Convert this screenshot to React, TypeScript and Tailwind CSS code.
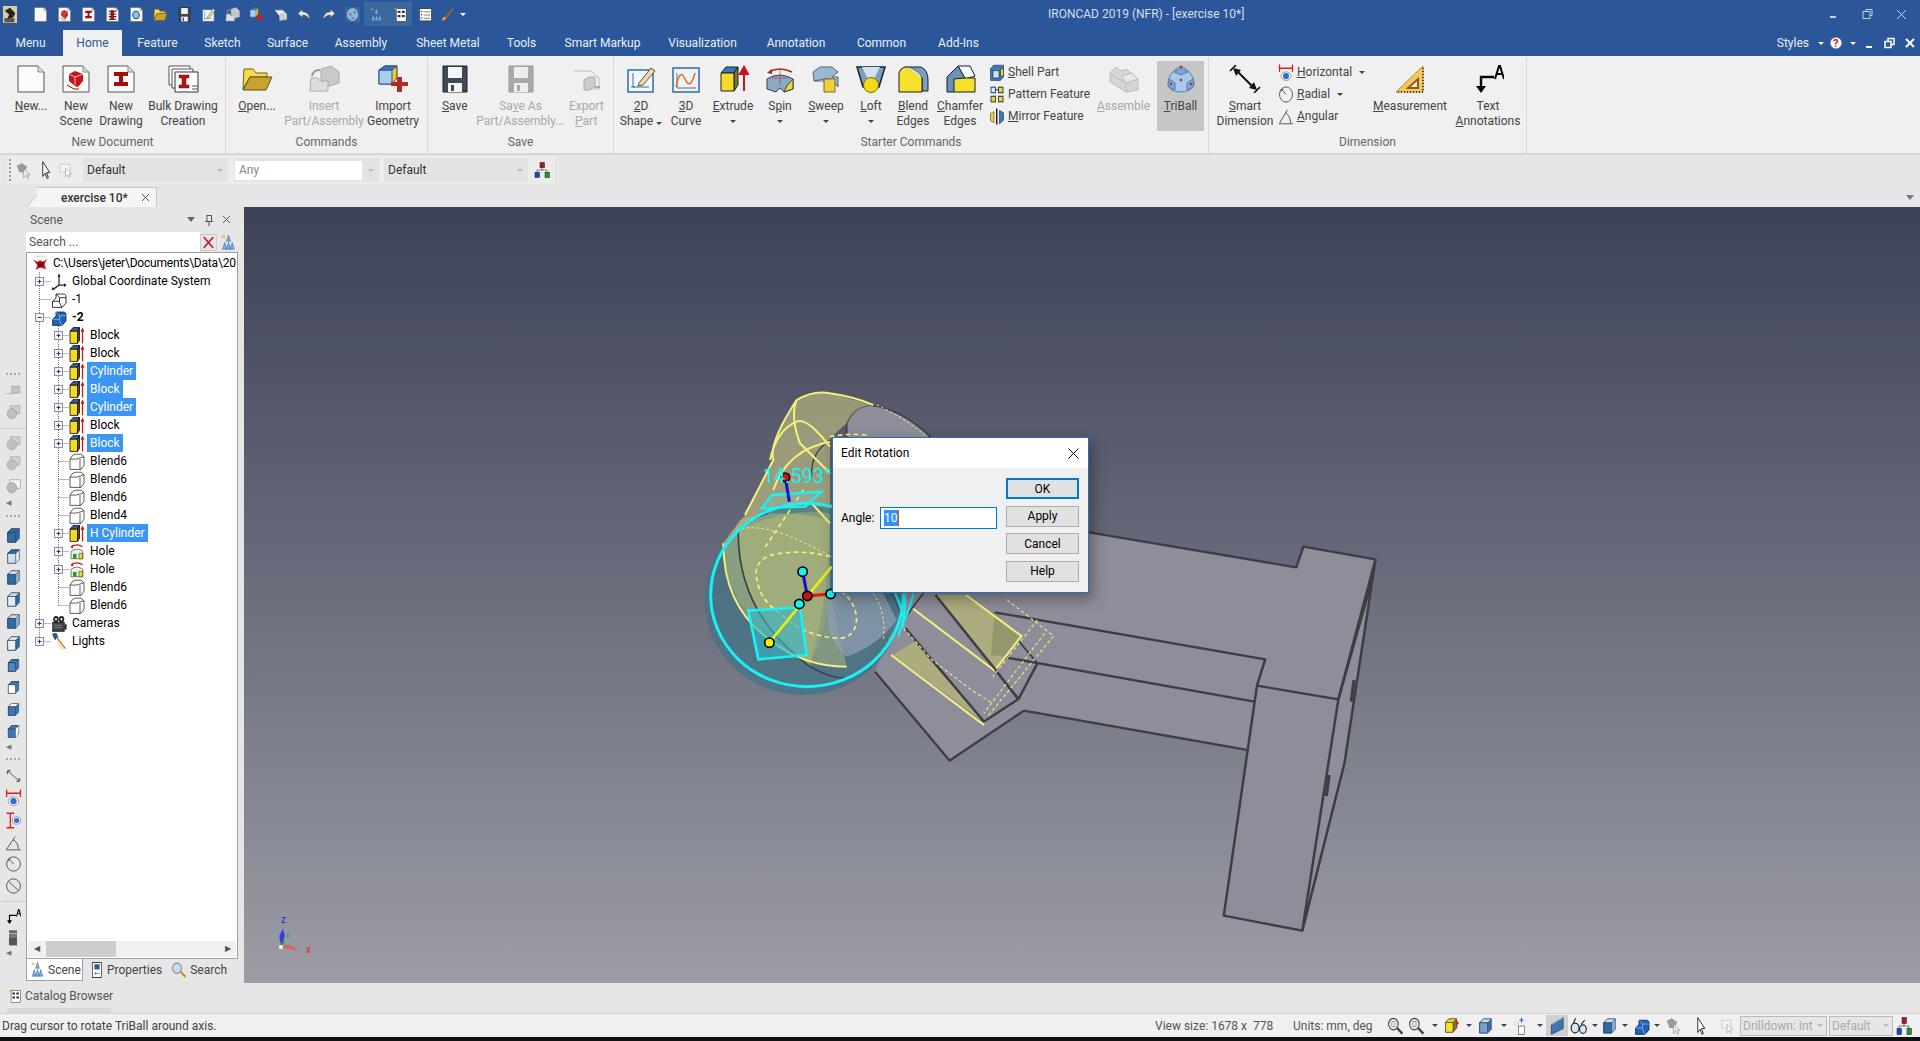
import React from 'react';

const FONT = 'font-["Roboto",_"Liberation_Sans",_sans-serif]';

const cube = (top: string, left: string, right: string) => (
  <>
    <path d="M5 9L12 3H27V19L20 25H5Z" fill={right} stroke="#234" />
    <path d="M5 9L12 3H27L20 9Z" fill={top} stroke="#234" />
    <path d="M5 9H20V25H5Z" fill={left} stroke="#234" />
  </>
);

const page = (
  <>
    <path d="M3 1H23L29 7V27H3Z" fill="#fbfbfb" stroke="#555" />
    <path d="M23 1V7H29" fill="#ddd" stroke="#888" />
  </>
);

const ibeam = <path d="M9 7H23V11H18V17H23V21H9V17H14V11H9Z" fill="#a40b0b" />;

// every drawing shares one 32x28 box, it gets squeezed by width/height
const ICONS: Record<string, React.ReactNode> = {
  logo: (
    <>
      <rect width="32" height="28" fill="#d8d0a0" />
      <path d="M4 8L16 3L28 12L24 18L8 24L14 14Z" fill="#222" />
      <path d="M3 20H26V27H3Z" fill="#555" />
    </>
  ),
  doc: page,
  scene: (
    <>
      {page}
      <path d="M9 9L15 6L23 9V16L18 22L15 21L9 16Z" fill="#c4151c" />
      <path d="M15 12V20M9 9L15 12L23 9" stroke="#fff" fill="none" strokeWidth=".7" />
      <path d="M7 20L14 24H19" stroke="#a00" fill="none" />
    </>
  ),
  root: (
    <>
      <path d="M2 8L11 12L16 9L22 12L30 7L25 16L28 25L17 22L7 26L11 18Z" fill="#d0101a" />
      <path d="M12 13L17 15L23 12V18L16 22L11 18Z" fill="#6a0a10" />
      <path d="M5 2L27 2" stroke="#333" strokeDasharray="2 3" />
    </>
  ),
  drawing: (
    <>
      {page}
      {ibeam}
    </>
  ),
  multi: (
    <>
      {page}
      <path d="M8 8H24M8 13H24M8 18H24M8 23H24" stroke="#222" strokeWidth="2" />
      <path d="M12 6H19V24H12Z" fill="#a40b0b" />
    </>
  ),
  globePage: (
    <>
      {page}
      <circle cx="15" cy="15" r="7" fill="#7ec8e8" stroke="#246" strokeWidth="2" />
    </>
  ),
  bulk: (
    <>
      <path d="M2 1H23V20H2Z" fill="#fff" stroke="#555" />
      <path d="M5 4H26V23H5Z" fill="#fff" stroke="#555" />
      <path d="M8 7H31V27H8Z" fill="#fff" stroke="#333" />
      <path d="M12 10H22V13H19V20H22V23H12V20H15V13H12Z" fill="#c81010" stroke="#222" strokeWidth=".5" />
      <path d="M25 21H31M25 24H31" stroke="#555" />
    </>
  ),
  folder: (
    <>
      <path d="M2 24L3 4H12L15 8H26V12H9Z" fill="#f7dc4a" stroke="#6d5f1e" />
      <path d="M2 25L9 12H31L25 25Z" fill="#c9a332" stroke="#5f5016" />
    </>
  ),
  insert: (
    <>
      <path d="M13 4L23 1L31 7V18L21 21L13 15Z" fill="#c9c9c9" stroke="#aaa" />
      <path d="M2 26L3 13H10L12 16H20V26Z" fill="#dedede" stroke="#aaa" />
      <path d="M4 11Q5 5 12 5" fill="none" stroke="#999" strokeWidth="2" />
    </>
  ),
  importGeo: (
    <>
      <path d="M2 5L8 1H20V13L15 19H2Z" fill="#f0c92c" stroke="#234" />
      <path d="M2 5H15V19H2Z" fill="#a8cbee" stroke="#1f5a9a" />
      <path d="M2 5L8 1H20L15 5Z" fill="#3f77b5" stroke="#1f5a9a" />
      <path d="M20 12H25V17H31V21H25V27H20V21H14V17H20Z" fill="#b32a25" />
    </>
  ),
  floppy: (
    <>
      <path d="M4 1H28V27H4Z" fill="#3f4a59" stroke="#222" />
      <path d="M9 2H23V13H9Z" fill="#f4f4f4" />
      <path d="M9 18H23V27H9Z" fill="#f4f4f4" />
      <path d="M12 20H15V26H12Z" fill="#3f4a59" />
    </>
  ),
  floppyOff: (
    <>
      <path d="M4 1H28V27H4Z" fill="#a9a9a9" stroke="#999" />
      <path d="M9 2H23V13H9Z" fill="#eee" />
      <path d="M9 18H23V27H9Z" fill="#eee" />
      <path d="M12 20H15V26H12Z" fill="#a9a9a9" />
    </>
  ),
  exportPart: (
    <>
      <path d="M4 6H21L29 13V24H20" fill="#f0f0f0" stroke="#bbb" />
      <path d="M14 15L19 12H25V20L20 25H14Z" fill="#ccc" stroke="#aaa" />
      <path d="M24 22H30" stroke="#aaa" strokeWidth="2" />
    </>
  ),
  shape2d: (
    <>
      <rect x="3" y="5" width="25" height="22" fill="#f4f8fc" stroke="#2f6ca8" strokeWidth="1.5" />
      <path d="M8 8V22H24M6 22H10" stroke="#2f6ca8" fill="none" />
      <path d="M14 18L26 3L30 6L18 20L13 21Z" fill="#f0d9a0" stroke="#555" />
    </>
  ),
  curve3d: (
    <>
      <rect x="3" y="3" width="26" height="24" fill="#eef3f8" stroke="#2f6ca8" strokeWidth="1.5" />
      <path d="M7 8V23H26" stroke="#668" fill="none" />
      <path d="M6 22Q10 2 15 14T25 8" stroke="#e86a20" fill="none" strokeWidth="1.5" />
    </>
  ),
  extrude: (
    <>
      <path d="M4 8L9 2H21L17 8Z" fill="#3f77b5" stroke="#123" />
      <path d="M17 8L21 2V20L17 26Z" fill="#8a7420" stroke="#123" />
      <path d="M4 8H17V26H4Z" fill="#f7d928" stroke="#123" />
      <path d="M27 26V8M23 9L27 2L31 9Z" stroke="#d0101a" fill="#d0101a" strokeWidth="2" />
    </>
  ),
  treeBlock: (
    <>
      <path d="M2 7L8 1H21L17 7Z" fill="#2a62aa" stroke="#111" strokeWidth="1.5" />
      <path d="M17 7L21 1V22L17 27Z" fill="#5a4c10" stroke="#111" strokeWidth="1.5" />
      <path d="M2 7H17V27H2Z" fill="#f7d928" stroke="#111" strokeWidth="1.5" />
      <path d="M27 27V7" stroke="#d0101a" strokeWidth="2.4" />
      <path d="M23 8L27 1L31 8Z" fill="#d0101a" />
    </>
  ),
  spin: (
    <>
      <path d="M3 14Q15 6 29 14V24L20 27Q16 20 12 27L3 24Z" fill="#8da8c4" stroke="#345" />
      <path d="M20 27Q22 20 29 14V24Z" fill="#f2d52a" stroke="#345" />
      <path d="M5 7Q15 1 28 7" fill="none" stroke="#a5281e" strokeWidth="1.5" />
      <path d="M3 8L8 4V9Z" fill="#a5281e" />
      <path d="M16 5V20M8 13H24" stroke="#a33" strokeWidth=".6" />
    </>
  ),
  sweep: (
    <>
      <path d="M3 7L10 2H22L28 7L22 12H28V22L21 14H14L4 16Z" fill="#9ab7d4" stroke="#567" />
      <path d="M14 14H25V27H14Z" fill="#f2cf3c" stroke="#7a6a20" />
      <path d="M4 16H14V14" fill="none" stroke="#567" />
    </>
  ),
  loft: (
    <>
      <path d="M2 2H30L24 22H8Z" fill="#7f9dbd" stroke="#123" strokeWidth="1.5" />
      <path d="M7 2H25L19 14H13Z" fill="#d4e2f0" />
      <circle cx="16" cy="20" r="7.5" fill="#f5d818" stroke="#7a6a10" />
    </>
  ),
  blend: (
    <>
      <path d="M8 2H24Q31 5 31 15V26H25V13Z" fill="#7f9dbd" stroke="#123" />
      <path d="M2 8Q3 3 8 2Q20 3 25 13V27H2Z" fill="#f7e02c" stroke="#123" />
      <path d="M8 2Q20 3 25 13L21 10Q13 3 8 2" fill="#cfdcea" />
    </>
  ),
  chamfer: (
    <>
      <path d="M14 1H26L31 11L21 14Z" fill="#fafafa" stroke="#123" />
      <path d="M3 12L14 1L21 13L10 27H3Z" fill="#6d90b5" stroke="#123" />
      <path d="M10 14L21 13H31V27H10Z" fill="#f7e02c" stroke="#123" />
    </>
  ),
  shell: (
    <>
      <path d="M3 8L9 2H29V21L23 27H3Z" fill="#3f77b5" stroke="#123" />
      <path d="M8 11H20V23H8Z" fill="#cfe0f2" stroke="#123" />
      <path d="M23 8H29V20H23Z" fill="#f2cf3c" stroke="#123" />
    </>
  ),
  pattern: (
    <>
      <rect x="4" y="2" width="9" height="9" fill="#dbe8f6" stroke="#1f5a9a" strokeWidth="2" />
      <rect x="19" y="2" width="9" height="9" fill="#f2d52a" stroke="#444" strokeWidth="2" />
      <rect x="4" y="17" width="9" height="9" fill="#f2d52a" stroke="#444" strokeWidth="2" />
      <rect x="19" y="17" width="9" height="9" fill="#f2d52a" stroke="#444" strokeWidth="2" />
      <path d="M13 6H19" stroke="#1f5a9a" strokeWidth="2" />
    </>
  ),
  mirror: (
    <>
      <path d="M3 9L10 6V24L3 21Z" fill="#f2d52a" stroke="#333" />
      <path d="M14 1H17V27H14Z" fill="#223" />
      <path d="M21 4L29 8V20L21 26Z" fill="#3f77b5" stroke="#123" />
    </>
  ),
  assemble: (
    <>
      <path d="M2 8L8 2L13 6L18 4L30 14V25L18 27L2 17Z" fill="#d6d6d6" stroke="#bbb" />
      <path d="M14 11L24 8L30 14L18 18Z" fill="#e8e8e8" stroke="#bbb" />
      <path d="M18 18V27M2 9L18 18" stroke="#bbb" />
    </>
  ),
  triball: (
    <>
      <path d="M16 1Q30 8 29 20Q26 27 16 27Q5 27 3 20Q2 8 16 1Z" fill="#a9c8ee" stroke="#5b7ea8" />
      <path d="M9 7L16 3L23 7L16 10Z" fill="#7aa7dc" stroke="#5b7ea8" />
      <path d="M4 14L10 18V25Q5 24 3 20ZM28 14L22 18V25Q27 24 29 20Z" fill="#7aa7dc" stroke="#5b7ea8" />
      <circle cx="16" cy="2" r="1.3" fill="#d0202a" />
      <circle cx="16" cy="15" r="1.3" fill="#d0202a" />
      <circle cx="6" cy="19" r="1.3" fill="#d0202a" />
      <circle cx="26" cy="19" r="1.3" fill="#d0202a" />
    </>
  ),
  smartDim: (
    <>
      <path d="M1 6L7 0M25 28L31 22" stroke="#111" strokeWidth="1.6" />
      <path d="M7 5L25 23" stroke="#111" strokeWidth="2" />
      <path d="M4 3L12 5L7 11ZM28 25L20 23L25 17Z" fill="#111" />
    </>
  ),
  horizontal: (
    <>
      <path d="M3 1V13M29 1V13M4 7H28" stroke="#e01a1a" strokeWidth="2.4" />
      <ellipse cx="16" cy="20" rx="10" ry="7" fill="#fff" stroke="#555" />
      <ellipse cx="16" cy="20" rx="6" ry="5" fill="#2a6fd0" />
    </>
  ),
  vertical: (
    <>
      <path d="M3 2H17M3 26H17M10 3V25" stroke="#e01a1a" strokeWidth="2.4" />
      <ellipse cx="22" cy="14" rx="8" ry="6" fill="#fff" stroke="#555" />
      <ellipse cx="22" cy="14" rx="5" ry="4" fill="#2a6fd0" />
    </>
  ),
  radial: (
    <>
      <ellipse cx="16" cy="14" rx="13" ry="12.5" fill="none" stroke="#333" strokeWidth="1.4" />
      <path d="M16 14L8 6M6 9L7 5L11 5" stroke="#333" fill="none" strokeWidth="1.4" />
    </>
  ),
  diameter: (
    <>
      <ellipse cx="16" cy="14" rx="13" ry="12.5" fill="none" stroke="#333" strokeWidth="1.4" />
      <path d="M7 6L25 22" stroke="#333" strokeWidth="1.4" />
    </>
  ),
  angular: (
    <>
      <path d="M2 26H30M3 25L19 3" stroke="#333" strokeWidth="1.4" />
      <path d="M15 8Q25 13 25 25" stroke="#333" fill="none" strokeWidth="1.4" />
    </>
  ),
  measure: (
    <>
      <path d="M29 1V27H2Z" fill="#f3c95a" stroke="#b5892a" />
      <path d="M24 14V23H14Z" fill="#f0f0f0" stroke="#a4501e" strokeWidth="2" />
      <path d="M29 3V27H3" fill="none" stroke="#222" strokeDasharray="1 2" strokeWidth="1.5" />
    </>
  ),
  textAnn: (
    <>
      <path d="M22 12H9V26" fill="none" stroke="#000" strokeWidth="2.4" />
      <path d="M4 21H14L9 28Z" fill="#000" />
      <path d="M23 14L27 1H28L32 14M25 9H30" fill="none" stroke="#000" strokeWidth="2" />
    </>
  ),
  tree: (
    <>
      <path d="M16 2L12 12H20Z M9 14L5 25H13Z M23 14L19 25H27Z M16 14L12 25H20Z" fill="#7fb0df" stroke="#2c6aa8" />
      <path d="M5 3L8 6M8 3L5 6M3 4.500H10" stroke="#e8a400" strokeWidth="1.2" />
    </>
  ),
  treeSpark: (
    <>
      <rect x="7" y="3" width="21" height="24" fill="#fff" stroke="#222" />
      <path d="M10 7H16V11H10ZM19 7H25V11H19ZM10 15H16V19H10ZM19 15H25V19H19Z" fill="#333" />
      <path d="M5 2L8 6M8 2L5 6M3 4H10" stroke="#e8a400" strokeWidth="1.5" />
    </>
  ),
  listBox: (
    <>
      <rect x="3" y="3" width="26" height="23" fill="#fff" stroke="#333" strokeWidth="1.5" />
      <path d="M12 9H26M12 15H26M12 21H26" stroke="#555" strokeWidth="1.5" />
      <path d="M6 7H9V10H6ZM6 13H9V16H6ZM6 19H9V22H6Z" fill="#555" />
    </>
  ),
  brush: (
    <>
      <path d="M10 20L27 2L29 4L13 23Z" fill="#a5651e" />
      <path d="M4 26Q7 16 12 19Q14 23 4 26" fill="#f2c94a" stroke="#c83a20" />
    </>
  ),
  undo: <path d="M2 12L12 4V9Q26 9 28 24Q22 15 12 15V20Z" fill="#e6e6e6" stroke="#444" />,
  redo: <path d="M30 12L20 4V9Q6 9 4 24Q10 15 20 15V20Z" fill="#e6e6e6" stroke="#444" />,
  globe: (
    <>
      <rect width="32" height="28" fill="#39689f" />
      <circle cx="16" cy="14" r="11" fill="#6ec7e0" stroke="#ddd" />
      <path d="M9 11H14V16H9ZM18 8H23V12H18ZM14 19H20V23H14Z" fill="#e8487c" />
    </>
  ),
  coord: (
    <>
      <path d="M16 3V20M16 20H30M16 20L4 27" stroke="#222" strokeWidth="2.4" />
      <path d="M13 6L16 1L19 6ZM26 17L31 20L26 23ZM3 23L1 28L7 27Z" fill="#222" />
    </>
  ),
  partWhite: (
    <>
      <path d="M3 17L10 12V5H27L30 8V20L22 27H3Z" fill="#fff" stroke="#111" strokeWidth="1.5" />
      <path d="M10 5L17 11H30M17 11V19L22 27M3 17H17" fill="none" stroke="#111" strokeWidth="1.5" />
    </>
  ),
  partBlue: (
    <>
      <path d="M3 17L10 12V5H27L30 8V20L22 27H3Z" fill="#1f63b8" stroke="#0c2d5c" strokeWidth="1.5" />
      <path d="M10 5L17 11H30M17 11V19L22 27M3 17H17" fill="none" stroke="#a8c8f0" strokeWidth="1.2" />
    </>
  ),
  blendFeat: (
    <>
      <path d="M2 10Q5 4 12 2H24L30 6V20L24 27H2Z" fill="#fff" stroke="#222" strokeWidth="1.3" />
      <path d="M2 10H15Q24 8 30 6M22 10V27" fill="none" stroke="#222" strokeWidth="1.3" />
    </>
  ),
  hole: (
    <>
      <path d="M4 14Q16 6 28 14V26H4Z" fill="#eee" stroke="#222" />
      <path d="M5 6Q16 0 27 6" fill="none" stroke="#d81010" strokeWidth="2" />
      <path d="M3 7L8 3V9Z" fill="#d81010" />
      <path d="M8 18H15V26H8Z" fill="#20a020" />
      <path d="M20 17H27V26H20Z" fill="#f2d52a" stroke="#333" />
    </>
  ),
  camera: (
    <>
      <circle cx="10" cy="7" r="5.500" fill="#222" />
      <circle cx="21" cy="7" r="5.500" fill="#222" />
      <circle cx="10" cy="7" r="2" fill="#eee" />
      <circle cx="21" cy="7" r="2" fill="#eee" />
      <rect x="3" y="12" width="24" height="15" fill="#3a3a48" stroke="#111" />
      <path d="M6 17H23M6 21H23" stroke="#ccc" />
      <path d="M27 17L31 14V25L27 22Z" fill="#222" />
    </>
  ),
  light: (
    <>
      <path d="M3 2L10 0L14 7L8 11Z" fill="#2060b0" stroke="#123" />
      <path d="M10 9L14 7L30 23Q26 29 18 27Z" fill="#f0e6c0" />
      <path d="M12 8L29 26" stroke="#d81010" strokeWidth="1.5" />
    </>
  ),
  propSheet: (
    <>
      <rect x="6" y="1" width="20" height="26" fill="#fff" stroke="#222" strokeWidth="1.5" />
      <rect x="10" y="4" width="12" height="9" fill="#2a5d99" />
      <path d="M11 20H22M14 17L11 20L14 23" stroke="#222" fill="none" />
    </>
  ),
  mag: (
    <>
      <circle cx="12" cy="11" r="9" fill="#c8dcf0" stroke="#8a8a9a" strokeWidth="2" />
      <path d="M19 17L29 26" stroke="#c89030" strokeWidth="4" />
    </>
  ),
  magDark: (
    <>
      <circle cx="12" cy="11" r="9" fill="#eee" stroke="#444" strokeWidth="2" />
      <path d="M19 17L29 26" stroke="#444" strokeWidth="4" />
      <path d="M9 7H15V15H9Z" fill="none" stroke="#666" />
    </>
  ),
  network: (
    <>
      <rect x="12" y="1" width="9" height="9" fill="#b01818" stroke="#222" />
      <rect x="2" y="18" width="9" height="9" fill="#1f3fd0" stroke="#222" />
      <rect x="22" y="18" width="9" height="9" fill="#1a9a30" stroke="#222" />
      <path d="M16 10V14M6 18V14H26V18" stroke="#222" fill="none" />
    </>
  ),
  arrowCursor: <path d="M8 1V24L13 19L17 27L20 26L16 18H23Z" fill="#fff" stroke="#111" strokeWidth="1.5" />,
  pickGray: (
    <>
      <path d="M3 6L12 2L22 8L16 17H8Z" fill="#9a9a9a" />
      <path d="M15 11V26L19 22L22 27L24 26L22 21H27Z" fill="#e8e8e8" stroke="#888" />
    </>
  ),
  boxGray: (
    <>
      <path d="M4 4H24V18H4Z" fill="#f4f4f4" stroke="#aaa" />
      <path d="M15 11V26L19 22L22 27L24 26L22 21H27Z" fill="#fff" stroke="#888" />
    </>
  ),
  dimThin: <path d="M3 8L8 3M24 25L29 20M6 6L26 22M5 11V5H11M27 17V23H21" stroke="#333" fill="none" strokeWidth="1.4" />,
  grayB: (
    <>
      <path d="M10 3H28V17H10Z" fill="#cfcfcf" stroke="#9a9a9a" />
      <circle cx="13" cy="17" r="9" fill="#bfbfbf" stroke="#9a9a9a" />
    </>
  ),
  grayC: (
    <>
      <path d="M9 3H29V18H9Z" fill="#f4f4f4" stroke="#888" />
      <circle cx="13" cy="17" r="9" fill="#bcbcbc" stroke="#888" />
    </>
  ),
  grayD: (
    <>
      <path d="M14 4H28V17H14Z" fill="#c4c4c4" stroke="#999" />
      <path d="M2 18H18" stroke="#999" />
    </>
  ),
  cubeSolid: cube('#2f6aa8', '#2f6aa8', '#2f6aa8'),
  cubeOpenTop: cube('#2f6aa8', '#cfe0f2', '#dfeaf5'),
  cubeOpenFront: cube('#cfe0f2', '#dfeaf5', '#2f6aa8'),
  cubeOpenSide: cube('#dfeaf5', '#e8f0f8', '#2f6aa8'),
  cubeBack: cube('#cfe0f2', '#2f6aa8', '#8db2d8'),
  solidA: cube('#3f77b5', '#4f86c2', '#3f77b5'),
  solidB: cube('#3f77b5', '#fff', '#3f77b5'),
  solidC: cube('#fff', '#3f77b5', '#3f77b5'),
  solidD: cube('#3f77b5', '#3f77b5', '#fff'),
  views: cube('#ccdff2', '#74a0cc', '#3f6f9f'),
  wedge: (
    <>
      <path d="M6 12L27 1V18L6 27Z" fill="#3f77b5" stroke="#123" />
      <path d="M6 12L27 1" stroke="#cfe0f2" />
    </>
  ),
  glasses: (
    <>
      <ellipse cx="9" cy="18" rx="7" ry="8" fill="#d8e6f4" stroke="#223" strokeWidth="2" />
      <ellipse cx="23" cy="20" rx="6" ry="7" fill="#d8e6f4" stroke="#223" strokeWidth="2" />
      <path d="M6 10L10 2M20 12L26 5" stroke="#223" strokeWidth="2" />
    </>
  ),
  yellowCube: (
    <>
      {cube('#f2d52a', '#f7e02c', '#8a7420')}
      <path d="M26 5L30 10H28V17" stroke="#d0101a" fill="none" strokeWidth="2" />
    </>
  ),
  spotDim: (
    <>
      <path d="M16 1V9M12 5H20" stroke="#2a6fd0" strokeWidth="2" />
      <rect x="10" y="14" width="12" height="13" fill="#fff" stroke="#333" />
      <circle cx="6" cy="10" r="3" fill="#fff" stroke="#555" strokeDasharray="1 1" />
    </>
  ),
  stack: (
    <>
      <path d="M8 2H24V7H8Z" fill="#666" />
      <path d="M8 8H24V27H8Z" fill="#555" />
      <path d="M8 10H24M8 13H24" stroke="#ccc" />
    </>
  ),
  xBtn: (
    <>
      <rect x="1" y="1" width="30" height="26" fill="#e6e6e6" stroke="#bbb" />
      <path d="M7 5L25 23M25 5L7 23" stroke="#c8202a" strokeWidth="3" />
    </>
  ),
};

const Ico = ({ n, w = 16, h = 16 }: { n: string; w?: number; h?: number }) => (
  <svg viewBox="0 0 32 28" width={w} height={h} preserveAspectRatio="none" className="shrink-0">
    {ICONS[n]}
  </svg>
);

const Caret = ({ dim }: { dim?: boolean }) => (
  <span className={`inline-block w-0 h-0 border-l-[3px] border-r-[3px] border-t-[3px] border-l-transparent border-r-transparent ${dim ? 'border-t-[#bbb]' : 'border-t-[#444]'}`} />
);

const WHITE_CARET = <span className="inline-block w-0 h-0 border-l-[3px] border-r-[3px] border-t-[3px] border-l-transparent border-r-transparent border-t-white" />;

const quickIcons: [string, string][] = [
  ['doc', 'w-[24px]'], ['scene', 'w-[24px]'], ['drawing', 'w-[24px]'], ['multi', 'w-[24px]'], ['globePage', 'w-[24px]'],
  ['folder', 'w-[24px]'], ['floppy', 'w-[24px]'], ['shape2d', 'w-[24px]'], ['insert', 'w-[24px]'], ['importGeo', 'w-[24px]'],
  ['exportPart', 'w-[24px]'], ['undo', 'w-[24px]'], ['redo', 'w-[24px]'], ['globe', 'w-[24px]'], ['tree', 'w-[24px] bg-[#39689f]'],
  ['treeSpark', 'w-[24px] bg-[#39689f]'], ['listBox', 'w-[26px]'], ['brush', 'w-[18px]'],
];

const tabs: [string, string][] = [
  ['Menu', 'w-[61px] mr-[2px]'], ['Home', 'w-[59px]'], ['Feature', 'w-[71px]'], ['Sketch', 'w-[59px]'], ['Surface', 'w-[71px]'],
  ['Assembly', 'w-[76px]'], ['Sheet Metal', 'w-[98px]'], ['Tools', 'w-[49px]'], ['Smart Markup', 'w-[113px]'],
  ['Visualization', 'w-[87px]'], ['Annotation', 'w-[100px]'], ['Common', 'w-[71px]'], ['Add-Ins', 'w-[83px]'],
];

function Big({ w, icon, l1, l2, off, caret, active }: { w: string; icon: string; l1: React.ReactNode; l2?: React.ReactNode; off?: boolean; caret?: boolean; active?: boolean }) {
  return (
    <div className={`${w} flex flex-col items-center pt-[4px] h-[70px] mt-[4px] ${active ? 'bg-[#c6c6c6]' : ''} ${off ? 'text-[#a9a9a9]' : 'text-[#444]'}`}>
      <Ico n={icon} w={32} h={28} />
      <div className="mt-[6px] text-[12px] leading-[15px] text-center whitespace-nowrap">{l1}</div>
      {l2 && <div className="text-[12px] leading-[15px] text-center whitespace-nowrap">{l2}</div>}
      {caret && <div className="h-[15px] flex items-center"><Caret /></div>}
    </div>
  );
}

function Small({ icon, children, caret }: { icon: string; children: React.ReactNode; caret?: boolean }) {
  return (
    <div className="h-[22px] flex items-center gap-[3px] text-[12px] text-[#444] whitespace-nowrap">
      <Ico n={icon} w={16} h={17} />
      <span>{children}</span>
      {caret && <span className="ml-[4px] flex"><Caret /></span>}
    </div>
  );
}

function Group({ w, label, children }: { w: string; label: string; children: React.ReactNode }) {
  return (
    <div className={`${w} h-full flex flex-col border-r border-[#d9d9d9] shrink-0`}>
      <div className="flex h-[80px]">{children}</div>
      <div className="text-[12px] leading-[15px] text-[#666] text-center mt-[-2px]">{label}</div>
    </div>
  );
}

function Ribbon() {
  return (
    <div className="h-[99px] bg-[#f0f0f0] border-b-2 border-[#d6d6d6] flex pt-[1px] shrink-0">
      <Group w="w-[226px]" label="New Document">
        <div className="w-[8px]" />
        <Big w="w-[46px]" icon="doc" l1={<><u>N</u>ew...</>} />
        <Big w="w-[44px]" icon="scene" l1="New" l2="Scene" />
        <Big w="w-[46px]" icon="drawing" l1="New" l2="Drawing" />
        <Big w="w-[78px]" icon="bulk" l1="Bulk Drawing" l2="Creation" />
      </Group>
      <Group w="w-[202px]" label="Commands">
        <Big w="w-[62px]" icon="folder" l1={<><u>O</u>pen...</>} />
        <Big w="w-[72px]" icon="insert" l1="Insert" l2="Part/Assembly" off />
        <Big w="w-[66px]" icon="importGeo" l1="Import" l2="Geometry" />
      </Group>
      <Group w="w-[186px]" label="Save">
        <Big w="w-[54px]" icon="floppy" l1={<><u>S</u>ave</>} />
        <Big w="w-[78px]" icon="floppyOff" l1={<>Sa<u>v</u>e As</>} l2="Part/Assembly..." off />
        <Big w="w-[54px]" icon="exportPart" l1="Export" l2={<><u>P</u>art</>} off />
      </Group>
      <Group w="w-[595px]" label="Starter Commands">
        <Big w="w-[54px]" icon="shape2d" l1={<><u>2</u>D</>} l2={<>Shape <Caret /></>} />
        <Big w="w-[36px]" icon="curve3d" l1={<><u>3</u>D</>} l2="Curve" />
        <Big w="w-[58px]" icon="extrude" l1={<><u>E</u>xtrude</>} caret />
        <Big w="w-[36px]" icon="spin" l1={<>S<u>p</u>in</>} caret />
        <Big w="w-[56px]" icon="sweep" l1={<><u>S</u>weep</>} caret />
        <Big w="w-[34px]" icon="loft" l1={<><u>L</u>oft</>} caret />
        <Big w="w-[50px]" icon="blend" l1={<><u>B</u>lend</>} l2="Edges" />
        <Big w="w-[44px]" icon="chamfer" l1={<><u>C</u>hamfer</>} l2="Edges" />
        <div className="w-[108px] pl-[7px] pt-[4px] flex flex-col">
          <Small icon="shell"><u>S</u>hell Part</Small>
          <Small icon="pattern">Pattern Feature</Small>
          <Small icon="mirror"><u>M</u>irror Feature</Small>
        </div>
        <Big w="w-[67px]" icon="assemble" l1={<><u>A</u>ssemble</>} off />
        <Big w="w-[47px]" icon="triball" l1={<><u>T</u>riBall</>} active />
      </Group>
      <Group w="w-[318px]" label="Dimension">
        <div className="w-[3px]" />
        <Big w="w-[66px]" icon="smartDim" l1={<><u>S</u>mart</>} l2="Dimension" />
        <div className="w-[92px] pt-[4px] flex flex-col">
          <Small icon="horizontal" caret><u>H</u>orizontal</Small>
          <Small icon="radial" caret><u>R</u>adial</Small>
          <Small icon="angular"><u>A</u>ngular</Small>
        </div>
        <Big w="w-[80px]" icon="measure" l1={<><u>M</u>easurement</>} />
        <Big w="w-[76px]" icon="textAnn" l1="Text" l2={<><u>A</u>nnotations</>} />
      </Group>
    </div>
  );
}

function Combo({ text, w, white, gray }: { text: string; w: string; white?: boolean; gray?: boolean }) {
  return (
    <div className={`${w} h-[24px] bg-[#e3e3e3] flex items-center text-[12px] ${gray ? 'text-[#888]' : 'text-[#333]'}`}>
      <div className={`flex-1 h-[19px] flex items-center pl-[4px] ${white ? 'bg-white ml-[1px]' : ''}`}>{text}</div>
      <div className="w-[17px] flex justify-center"><Caret dim /></div>
    </div>
  );
}

type Row = { t: string; lvl: 0 | 1; icon: string; exp?: '+' | '-'; sel?: boolean; bold?: boolean; last?: boolean };

const block = (t: string, sel?: boolean): Row => ({ t, lvl: 1, icon: 'treeBlock', exp: '+', sel });
const blend = (t: string, last?: boolean): Row => ({ t, lvl: 1, icon: 'blendFeat', last });

const rows: Row[] = [
  { t: 'Global Coordinate System', lvl: 0, icon: 'coord', exp: '+' },
  { t: '-1', lvl: 0, icon: 'partWhite' },
  { t: '-2', lvl: 0, icon: 'partBlue', exp: '-', bold: true },
  block('Block'), block('Block'), block('Cylinder', true), block('Block', true), block('Cylinder', true),
  block('Block'), block('Block', true),
  blend('Blend6'), blend('Blend6'), blend('Blend6'), blend('Blend4'),
  block('H Cylinder', true),
  { t: 'Hole', lvl: 1, icon: 'hole', exp: '+' },
  { t: 'Hole', lvl: 1, icon: 'hole', exp: '+' },
  blend('Blend6'), blend('Blend6', true),
  { t: 'Cameras', lvl: 0, icon: 'camera', exp: '+' },
  { t: 'Lights', lvl: 0, icon: 'light', exp: '+', last: true },
];

// dotted tree lines and the +/- box for one row
function Guides({ row }: { row: Row }) {
  const x = row.lvl === 0 ? 12.5 : 31.5;
  const width = row.lvl === 0 ? 24 : 42;
  const outerLast = row.t === 'Lights';
  return (
    <svg width={width} height={18} className="shrink-0">
      <g stroke="#777" strokeDasharray="1 1" fill="none">
        {!outerLast && <path d="M12.500 0V18" />}
        {outerLast && <path d="M12.500 0V9" />}
        {row.lvl === 1 && <path d={row.last ? 'M31.500 0V9' : 'M31.500 0V18'} />}
        {row.t === '-2' && <path d="M31.500 9V18" />}
        <path d={`M${x} 9.500H${width}`} />
      </g>
      {row.exp && (
        <g>
          <rect x={x - 4} y={5.5} width={8} height={8} fill="#f4f4f8" stroke="#8a8fa0" />
          <path d={row.exp === '+' ? `M${x - 2} 9.500H${x + 2}M${x} 7.500V11.500` : `M${x - 2} 9.500H${x + 2}`} stroke="#223a7a" />
        </g>
      )}
    </svg>
  );
}

function SceneTree() {
  return (
    <div className="flex-1 border border-[#a0a0a0] bg-white flex flex-col min-h-0">
      <div className="flex-1 pt-[1px] overflow-hidden">
        <div className="h-[18px] flex items-center pl-[5px] whitespace-nowrap">
          <Ico n="root" w={16} h={16} />
          <span className="ml-[5px] text-[12px] text-black tracking-[-0.2px]">C:\Users\jeter\Documents\Data\20</span>
        </div>
        {rows.map((r, i) => (
          <div key={i} className="h-[18px] flex items-center">
            <Guides row={r} />
            <Ico n={r.icon} w={16} h={17} />
            <span className={`ml-[2px] h-[18px] leading-[18px] px-[3px] text-[12px] ${r.bold ? 'font-bold' : ''} ${r.sel ? 'bg-[#3b95f5] text-white' : 'text-black'}`}>{r.t}</span>
          </div>
        ))}
      </div>
      <div className="h-[16px] mb-[1px] mx-[1px] bg-[#f0f0f0] flex items-center text-[#555]">
        <span className="w-[17px] flex justify-center text-[8px]">&#9664;</span>
        <div className="ml-[1px] w-[70px] h-full bg-[#cdcdcd]" />
        <div className="flex-1" />
        <span className="w-[17px] flex justify-center text-[8px]">&#9654;</span>
      </div>
    </div>
  );
}

function LeftTools() {
  const cell = 'flex items-center justify-center w-[26px]';
  const dots = <div className="w-[14px] border-t-2 border-dotted border-[#aaa]" />;
  const arrow = <span className="text-[7px] text-[#777] mr-[10px]">&#9664;</span>;
  const sep = <div className="w-[24px] border-t border-[#ccc]" />;
  return (
    <div className="w-[26px] pt-[160px] flex flex-col shrink-0">
      <div className={`${cell} h-[14px]`}>{dots}</div>
      <div className={`${cell} h-[20px]`}><Ico n="grayD" w={18} h={15} /></div>
      <div className={`${cell} h-[22px]`}><Ico n="grayB" w={17} h={16} /></div>
      <div className={`${cell} h-[10px]`}>{sep}</div>
      <div className={`${cell} h-[19px]`}><Ico n="grayB" w={17} h={16} /></div>
      <div className={`${cell} h-[22px]`}><Ico n="grayB" w={17} h={16} /></div>
      <div className={`${cell} h-[24px]`}><Ico n="grayC" w={17} h={16} /></div>
      <div className={`${cell} h-[10px]`}>{arrow}</div>
      <div className={`${cell} h-[16px]`}>{dots}</div>
      <div className={`${cell} h-[22px]`}><Ico n="cubeSolid" w={17} h={17} /></div>
      <div className={`${cell} h-[20px]`}><Ico n="cubeOpenTop" w={17} h={17} /></div>
      <div className={`${cell} h-[22px]`}><Ico n="cubeBack" w={17} h={17} /></div>
      <div className={`${cell} h-[22px]`}><Ico n="cubeOpenFront" w={17} h={17} /></div>
      <div className={`${cell} h-[22px]`}><Ico n="cubeBack" w={17} h={17} /></div>
      <div className={`${cell} h-[22px]`}><Ico n="cubeOpenSide" w={17} h={17} /></div>
      <div className={`${cell} h-[22px]`}><Ico n="solidA" w={15} h={15} /></div>
      <div className={`${cell} h-[22px]`}><Ico n="solidB" w={15} h={15} /></div>
      <div className={`${cell} h-[22px]`}><Ico n="solidC" w={15} h={15} /></div>
      <div className={`${cell} h-[22px]`}><Ico n="solidD" w={15} h={15} /></div>
      <div className={`${cell} h-[10px]`}>{arrow}</div>
      <div className={`${cell} h-[14px]`}>{dots}</div>
      <div className={`${cell} h-[20px]`}><Ico n="dimThin" w={17} h={16} /></div>
      <div className={`${cell} h-[22px]`}><Ico n="horizontal" w={17} h={17} /></div>
      <div className={`${cell} h-[24px]`}><Ico n="vertical" w={17} h={17} /></div>
      <div className={`${cell} h-[22px]`}><Ico n="angular" w={17} h={16} /></div>
      <div className={`${cell} h-[20px]`}><Ico n="radial" w={17} h={16} /></div>
      <div className={`${cell} h-[24px]`}><Ico n="diameter" w={17} h={16} /></div>
      <div className={`${cell} h-[6px]`}>{sep}</div>
      <div className={`${cell} h-[25px]`}><Ico n="textAnn" w={16} h={15} /></div>
      <div className={`${cell} h-[16px]`}><Ico n="stack" w={16} h={17} /></div>
      <div className={`${cell} h-[16px]`}>{arrow}</div>
    </div>
  );
}

function ScenePanel() {
  return (
    <div className="w-[212px] flex flex-col shrink-0 pb-[2px]">
      <div className="h-[25px] flex items-center text-[12px] text-[#555] pl-[4px]">
        <span className="flex-1">Scene</span>
        <span className="mr-[9px] flex"><span className="inline-block w-0 h-0 border-l-[4px] border-r-[4px] border-t-[5px] border-l-transparent border-r-transparent border-t-[#666]" /></span>
        <svg width="10" height="12" className="mr-[8px]"><path d="M2.500 1.500H7.500V7M1 7.500H9M5 8V12M3 2V7" stroke="#555" fill="none" /></svg>
        <svg width="9" height="9" className="mr-[7px]"><path d="M1 1L8 8M8 1L1 8" stroke="#555" /></svg>
      </div>
      <div className="h-[20px] flex items-center">
        <div className="w-[174px] h-full bg-white text-[12px] leading-[20px] pl-[3px] text-[#555]">Search ...</div>
        <Ico n="xBtn" w={17} h={17} />
        <span className="ml-[3px]"><Ico n="tree" w={17} h={17} /></span>
      </div>
      <SceneTree />
      <div className="h-[22px] flex items-center text-[12px] text-[#444] shrink-0">
        <div className="w-[57px] h-full bg-white border border-t-0 border-[#a0a0a0] flex items-center pl-[3px] gap-[3px]">
          <Ico n="tree" w={15} h={17} /> Scene
        </div>
        <div className="ml-[7px] flex items-center gap-[3px]"><Ico n="propSheet" w={14} h={16} /> Properties</div>
        <div className="ml-[9px] flex items-center gap-[3px]"><Ico n="mag" w={16} h={16} /> Search</div>
      </div>
    </div>
  );
}

// the 3D model is a drawing: coordinates below are in page pixels through the two group transforms
function Model() {
  const dark = '#3d3d44';
  const yel = '#f6f07a';
  const cyan = '#18f2f5';
  return (
    <svg viewBox="244 207 1676 776" className="w-full h-full block">
      <g transform="translate(850 500) scale(.357 .3333)">
        <path d="M670 97L1250 202L1270 140L1472 178L1385 790L1267 1292L1047 1247L1112 750L487 632L279 782L70 515L150 300Z" fill="#8e8e9b" />
        <g stroke={dark} strokeWidth="7" fill="none" strokeLinejoin="round">
          <path d="M670 97L1250 202L1270 140L1472 178" />
          <path d="M1472 178L1368 598L1140 557" />
          <path d="M405 337L1163 478L1140 557L1047 1247L1267 1292L1368 598" />
          <path d="M435 472L1133 605" />
          <path d="M487 632L1112 750" />
          <path d="M487 632L279 782L70 515" />
          <path d="M1472 178L1385 790L1267 1292" />
          <path d="M1465 230L1368 598" />
          <path d="M525 490L472 597L375 665M240 285L472 597M155 385L375 665" />
          <path d="M405 337L395 465L435 472M525 490L405 337" strokeWidth="5" />
          <path d="M1412 540L1404 605M1342 825L1334 888" strokeWidth="9" />
        </g>
        <path d="M240 285L405 510L480 408L325 285Z" fill="#adac7e" />
        <path d="M405 337L395 465L437 470L480 408Z" fill="#96966f" />
        <path d="M120 465L180 425L375 665Z" fill="#adac7e" />
        <g stroke={yel} strokeWidth="6" fill="none">
          <path d="M175 325L405 512L480 408L325 285" />
          <path d="M115 465L375 675" />
        </g>
        <g stroke={dark} strokeWidth="6" fill="none">
          <path d="M240 285L405 505L470 597M155 385L375 665" />
        </g>
        <g stroke={yel} fill="none" strokeWidth="3" strokeDasharray="10 7">
          <path d="M570 408L385 650M545 400L375 640M525 360L400 530M440 300L570 408M150 385L230 480L340 570L400 610M90 450L130 380" />
        </g>
      </g>
      <g transform="translate(690 380) scale(.3333)">
        <path d="M470 130Q490 80 540 75Q640 90 720 170L700 640L640 720L470 300Z" fill="#8e8e9b" stroke={dark} strokeWidth="5" />
        <path d="M165 405L250 240Q235 190 320 60Q370 30 420 40L545 75Q490 80 470 130L420 175L420 620Q400 820 350 840Q100 700 100 490Z" fill="#c4c482" fillOpacity=".6" />
        <ellipse cx="340" cy="660" rx="296" ry="285" fill="#3f7486" fillOpacity=".7" />
        <path d="M145 450Q140 700 360 860Q420 640 420 400Q300 380 145 450Z" fill="#8f9f78" fillOpacity=".8" />
        <path d="M100 490Q110 680 240 780Q340 860 470 860L420 640L420 420Q260 380 150 420Z" fill="#c0c47e" fillOpacity=".45" />
        <path d="M145 450Q140 700 360 860Q430 900 480 895" fill="none" stroke={dark} strokeWidth="5" />
        <path d="M420 180Q360 220 365 290M145 450Q170 420 235 400" fill="none" stroke={dark} strokeWidth="4" />
        <path d="M415 650Q400 780 470 830Q560 800 620 720L560 600Z" fill="#8f9db0" fillOpacity=".75" />
        <g fill="none" stroke={yel} strokeWidth="6">
          <path d="M165 405L250 240Q235 190 320 60Q370 30 420 40Q490 50 550 75" />
          <path d="M240 240Q260 150 320 125Q350 110 420 200" />
          <path d="M320 60Q300 110 330 190L420 280" />
          <path d="M250 330Q290 210 420 185" />
          <path d="M100 490Q100 680 240 780Q340 860 470 860" />
          <path d="M365 370L420 430" />
        </g>
        <g fill="none" stroke={yel} strokeWidth="5" strokeDasharray="14 10">
          <path d="M340 330L220 510" />
          <path d="M420 530Q350 510 270 520Q200 530 198 580Q205 660 270 700Q340 770 450 775Q500 770 500 710Q490 660 460 640" />
          <path d="M420 170Q470 160 530 165" />
        </g>
        <g fill="none" stroke={yel} strokeWidth="3" strokeDasharray="8 7">
          <path d="M140 450Q200 430 300 470Q370 500 425 530" />
          <path d="M550 640Q590 700 580 780" />
          <path d="M560 75Q640 110 710 170" />
        </g>
        <ellipse cx="351" cy="645" rx="289" ry="275" fill="none" stroke={cyan} strokeWidth="9" />
        <path d="M615 640Q645 700 640 740M645 640Q650 700 625 770M670 640Q660 690 640 725" fill="none" stroke={cyan} strokeWidth="6" />
        <path d="M215 385L245 345L395 335L345 380Z" fill="#7ccfc8" fillOpacity=".25" stroke={cyan} strokeWidth="7" />
        <path d="M175 692L330 682L350 825L205 838Z" fill="#35b6c4" fillOpacity=".65" stroke={cyan} strokeWidth="8" />
        <path d="M238 788L425 560" stroke="#e6ee10" strokeWidth="8" />
        <path d="M286 292L298 365" stroke="#1010d0" strokeWidth="9" />
        <path d="M352 648L338 575" stroke="#1010d0" strokeWidth="9" />
        <path d="M352 648L420 642" stroke="#f01010" strokeWidth="9" />
        <circle cx="238" cy="788" r="14" fill="#f5ef10" stroke="#000" strokeWidth="5" />
        <circle cx="338" cy="575" r="14" fill="#18f2f5" stroke="#000" strokeWidth="5" />
        <circle cx="422" cy="642" r="14" fill="#18f2f5" stroke="#000" strokeWidth="5" />
        <circle cx="328" cy="672" r="14" fill="#18f2f5" stroke="#000" strokeWidth="5" />
        <circle cx="352" cy="648" r="14" fill="#d01010" stroke="#000" strokeWidth="5" />
        <circle cx="286" cy="292" r="13" fill="#d01010" stroke="#000" strokeWidth="5" />
        <text x="218" y="308" fill={cyan} fontSize="60" fontFamily="Roboto, sans-serif">14.593°</text>
      </g>
      <g fontFamily="Roboto, sans-serif" fontSize="10">
        <path d="M281 947L279 936L283 928L285 936Z" fill="#3a3ad8" stroke="#8a8ae0" strokeWidth=".5" />
        <path d="M281 947L299 951L288 944Z" fill="#e06060" />
        <path d="M281 947L284 940" stroke="#20a040" strokeWidth="2" />
        <circle cx="281" cy="947" r="2" fill="#fff" />
        <text x="281" y="923" fill="#2030e0">z</text>
        <text x="286" y="937" fill="#20b040" fontSize="8">y</text>
        <text x="306" y="953" fill="#e02020">x</text>
      </g>
    </svg>
  );
}

function DialogBtn({ label, ok }: { label: string; ok?: boolean }) {
  return (
    <div className={`h-[21px] flex items-center justify-center bg-[#e1e1e1] text-[12px] text-black ${ok ? 'border-2 border-[#0078d7]' : 'border border-[#adadad]'}`}>
      {label}
    </div>
  );
}

function EditRotation() {
  return (
    <div className="absolute left-[832px] top-[437px] w-[257px] h-[156px] border border-[#2f6cb4] bg-[#f0f0f0] shadow-[4px_6px_14px_rgba(0,0,0,0.35)] flex flex-col">
      <div className="h-[30px] bg-white flex items-center justify-between pl-[8px] pr-[9px] text-[12px] text-black">
        <span>Edit Rotation</span>
        <svg width="11" height="11"><path d="M.5 .5L10.500 10.500M10.500 .5L.5 10.500" stroke="#111" /></svg>
      </div>
      <div className="flex-1 flex pl-[8px] pr-[9px]">
        <div className="flex-1 flex items-center pb-[24px] text-[12px] text-black">
          <span className="w-[39px]">Angle:</span>
          <div className="w-[117px] h-[22px] border border-[#0078d7] bg-white flex items-center pl-[3px]">
            <span className="bg-[#3390ff] text-white leading-[16px] border-r border-[#c85a10]">10</span>
          </div>
        </div>
        <div className="w-[73px] pt-[10px] flex flex-col gap-[6.5px]">
          <DialogBtn label="OK" ok />
          <DialogBtn label="Apply" />
          <DialogBtn label="Cancel" />
          <DialogBtn label="Help" />
        </div>
      </div>
    </div>
  );
}

function StatusBar() {
  return (
    <div className="h-[24px] bg-[#f0f0f0] border-t border-[#d4d4d4] flex items-center text-[12px] text-[#444] shrink-0 whitespace-nowrap">
      <div className="w-[1155px] pl-[2px]">Drag cursor to rotate TriBall around axis.</div>
      <div className="w-[138px] text-[#555]">View size: 1678 x&nbsp; 778</div>
      <div className="w-[94px] text-[#555]">Units: mm, deg</div>
      <div className="flex items-center gap-[4px]">
        <Ico n="magDark" w={17} h={18} />
        <Ico n="magDark" w={17} h={18} />
        <span className="ml-[3px] flex"><Caret /></span>
        <span className="ml-[1px]"><Ico n="yellowCube" w={16} h={17} /></span>
        <span className="ml-[3px] flex"><Caret /></span>
        <span className="ml-[1px]"><Ico n="views" w={17} h={18} /></span>
        <span className="ml-[3px] flex"><Caret /></span>
        <span className="ml-[2px]"><Ico n="spotDim" w={17} h={18} /></span>
        <span className="ml-[3px] flex"><Caret /></span>
        <span className="-ml-[1px] w-[22px] h-[21px] bg-[#cfcfcf] flex items-center justify-center"><Ico n="wedge" w={18} h={18} /></span>
        <span className="-ml-[2px]"><Ico n="glasses" w={18} h={17} /></span>
        <Caret />
        <span className="-ml-[1px]"><Ico n="cubeBack" w={17} h={18} /></span>
        <Caret />
        <span className="ml-[2px]"><Ico n="partBlue" w={16} h={18} /></span>
        <Caret />
        <span className="ml-[1px]"><Ico n="pickGray" w={18} h={18} /></span>
        <span className="ml-[7px]"><Ico n="arrowCursor" w={15} h={18} /></span>
        <span className="ml-[7px]"><Ico n="boxGray" w={15} h={16} /></span>
      </div>
      <div className="ml-[5px] w-[87px] h-[20px] border border-[#bbb] bg-[#e6e6e6] text-[#aaa] flex items-center pl-[2px] justify-between pr-[3px]">Drilldown: Int <Caret dim /></div>
      <div className="ml-[2px] w-[64px] h-[20px] border border-[#bbb] bg-[#e6e6e6] text-[#aaa] flex items-center pl-[2px] justify-between pr-[3px]">Default <Caret dim /></div>
      <span className="ml-[3px]"><Ico n="network" w={16} h={18} /></span>
    </div>
  );
}

export default function App() {
  return (
    <div className={`relative w-[1920px] h-[1041px] overflow-hidden flex flex-col bg-[#e6e6e6] ${FONT}`}>
      {/* title bar */}
      <div className="h-[28px] bg-[#2b579a] flex items-center shrink-0 text-[12px]">
        <div className="w-[1048px] flex items-center pl-[3px]">
          <div className="w-[25px]"><Ico n="logo" w={14} h={17} /></div>
          {quickIcons.map(([n, c], i) => (
            <div key={i} className={`${c} h-[24px] flex items-center justify-center`}><Ico n={n} w={15} h={15} /></div>
          ))}
          <span className="ml-[4px] flex">{WHITE_CARET}</span>
        </div>
        <span className="text-[#d6dfec]">IRONCAD 2019 (NFR) - [exercise 10*]</span>
        <div className="flex-1" />
        <svg width="90" height="14" className="text-[#c5d2e6]">
          <g stroke="currentColor" fill="none">
            <path d="M0 10H6" strokeWidth="2" />
            <path d="M33 4.500H40V11.500H33ZM36 4.500V2.500H42V8.500H40" />
            <path d="M67 3L76 12M76 3L67 12" />
          </g>
        </svg>
      </div>
      {/* ribbon tabs */}
      <div className="h-[28px] bg-[#2b579a] flex items-end shrink-0 text-[12px] text-[#e8eef6]">
        {tabs.map(([t, c]) =>
          t === 'Home' ? (
            <div key={t} className={`${c} h-[26px] bg-[#f0f0f0] text-[#2b579a] flex items-center justify-center`}>{t}</div>
          ) : (
            <div key={t} className={`${c} h-[26px] flex items-center justify-center`}>{t}</div>
          ),
        )}
        <div className="flex-1" />
        <div className="h-[26px] flex items-center text-[#e8eef6]">
          <span>Styles</span>
          <span className="ml-[9px] flex">{WHITE_CARET}</span>
          <span className="ml-[6px]"><svg width="12" height="14"><circle cx="6" cy="7" r="5.500" fill="#fff" stroke="#aaa" strokeDasharray="1 1" /><text x="3" y="11" fontSize="11" fontWeight="700" fill="#d01010" fontFamily="Roboto, sans-serif">?</text></svg></span>
          <span className="ml-[8px] flex">{WHITE_CARET}</span>
          <svg width="56" height="14" className="ml-[8px]">
            <g stroke="#fff" fill="none" strokeWidth="1.5">
              <path d="M2 11H8" strokeWidth="2" />
              <path d="M21 5.500H27V11.500H21ZM24 5V2.500H30V8.500H27" />
              <path d="M42 3L50 11M50 3L42 11" strokeWidth="2" />
            </g>
          </svg>
        </div>
      </div>
      <Ribbon />
      {/* selection toolbar */}
      <div className="h-[31px] shrink-0">
        <div className="ml-[7px] w-[548px] h-[28px] mt-[1px] bg-[#ececec] flex items-center">
          <div className="w-[2px] h-[22px] ml-[2px] border-l-2 border-dotted border-[#999]" />
          <span className="ml-[4px]"><Ico n="pickGray" w={18} h={17} /></span>
          <span className="ml-[6px]"><Ico n="arrowCursor" w={15} h={18} /></span>
          <span className="ml-[4px]"><Ico n="boxGray" w={16} h={16} /></span>
          <span className="ml-[9px]"><Combo text="Default" w="w-[145px]" /></span>
          <span className="ml-[6px]"><Combo text="Any" w="w-[145px]" white gray /></span>
          <span className="ml-[5px]"><Combo text="Default" w="w-[144px]" /></span>
          <span className="ml-[6px]"><Ico n="network" w={16} h={16} /></span>
        </div>
      </div>
      {/* document tab */}
      <div className="h-[21px] flex items-end shrink-0">
        <svg width="16" height="20" className="ml-[27px] -mr-[6px] shrink-0"><path d="M0 20L16 0V20Z" fill="#f5f5f5" /><path d="M0 20L16 0" stroke="#c8c8c8" /></svg>
        <div className="w-[120px] h-[20px] bg-[#f5f5f5] border-r border-t border-[#c8c8c8] flex items-center text-[12px] font-medium text-[#333]">
          <span className="ml-[24px] flex-1">exercise 10*</span>
          <svg width="9" height="9" className="mr-[6px]"><path d="M1 1L8 8M8 1L1 8" stroke="#555" /></svg>
        </div>
        <div className="flex-1" />
        <span className="mr-[6px] mb-[7px] inline-block w-0 h-0 border-l-[4px] border-r-[4px] border-t-[5px] border-l-transparent border-r-transparent border-t-[#777]" />
      </div>
      {/* work area */}
      <div className="h-[776px] flex shrink-0">
        <LeftTools />
        <ScenePanel />
        <div className="w-[6px] shrink-0" />
        <div className="flex-1 bg-gradient-to-b from-[#3e4257] to-[#9c9da5]">
          <Model />
        </div>
      </div>
      {/* catalog browser strip */}
      <div className="h-[30px] shrink-0 flex flex-col">
        <div className="h-[25px] flex items-center pl-[8px] text-[12px] text-[#555] gap-[3px]">
          <Ico n="treeSpark" w={14} h={14} /> Catalog Browser
        </div>
        <div className="ml-[7px] w-[104px] h-[5px] bg-[#d8d8d8]" />
      </div>
      <StatusBar />
      <div className="flex-1 bg-[#111]" />
      <EditRotation />
    </div>
  );
}
